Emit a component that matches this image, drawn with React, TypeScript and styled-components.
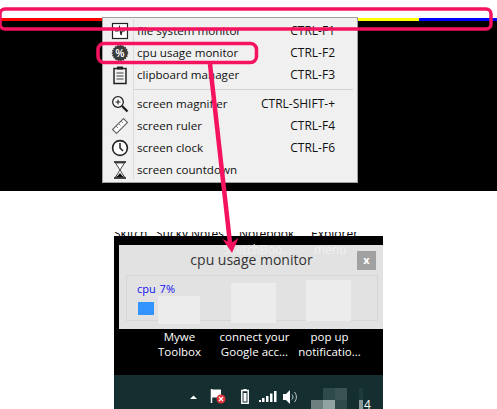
import React from "react";
import styled, { createGlobalStyle } from "styled-components";

const GlobalStyle = createGlobalStyle`
  html, body {
    margin: 0;
    padding: 0;
    background: #fff;
  }
  body {
    font-family: "Open Sans", "Liberation Sans", sans-serif;
    overflow: hidden;
  }
`;

const Page = styled.div`
  position: relative;
  width: 497px;
  height: 409px;
  padding-top: 17px;
  box-sizing: border-box;
  background: #fff;
  overflow: hidden;
`;

const TopScreen = styled.div`
  position: relative;
  height: 174px;
  background: #000;
`;

const Stripes = styled.div`
  position: absolute;
  inset: 0 0 auto 0;
  height: 4px;
  display: flex;
`;

const Stripe = styled.div<{ $w: number; $c: string }>`
  width: ${(p) => p.$w}px;
  background: ${(p) => p.$c};
  border-top: 1px solid #fff;
`;

const Menu = styled.div`
  position: relative;
  margin-left: 102px;
  width: 256px;
  height: 166px;
  box-sizing: border-box;
  padding: 2px 0 1px;
  background: #f0f0f0;
  border: 1px solid #a0a0a0;
  font-size: 11.6px;
  color: #111;
`;

const Gutter = styled.div`
  position: absolute;
  left: 30px;
  top: 2px;
  bottom: 3px;
  width: 1px;
  background: #dcdcdc;
`;

const Row = styled.div`
  height: 22px;
  display: flex;
  align-items: center;
  padding-right: 22px;
`;

const RowIcon = styled.div`
  width: 34px;
  display: flex;
  justify-content: center;
`;

const RowLabel = styled.span`
  flex: 1;
  padding-bottom: 2px;
`;

const RowKey = styled.span`
  font-size: 12px;
  padding-bottom: 2px;
`;

const Separator = styled.div`
  height: 1px;
  margin: 3px 4px 3px 30px;
  background: #d4d4d4;
`;

const Gap = styled.div`
  height: 45px;
  padding-top: 41px;
  box-sizing: border-box;
  background: #fff;
`;

const CutRow = styled.div`
  margin-left: 114px;
  height: 4px;
  display: flex;
  overflow: hidden;
  color: #000;
  font-size: 12px;
  line-height: 4px;
`;

const CutLabel = styled.span<{ $w: number }>`
  width: ${(p) => p.$w}px;
  white-space: nowrap;
`;

const LowerScreen = styled.div`
  position: relative;
  margin-left: 114px;
  width: 269px;
  height: 173px;
  display: flex;
  flex-direction: column;
  padding-top: 9px;
  box-sizing: border-box;
  background: #000;
`;

const Monitor = styled.div`
  position: relative;
  margin-left: 5px;
  width: 264px;
  height: 84px;
  box-sizing: border-box;
  padding: 0 0 0 7px;
  background: #e2e2e2;
  flex-shrink: 0;
`;

const GhostLabel = styled.span<{ $x: number }>`
  position: absolute;
  left: ${(p) => p.$x}px;
  top: -4px;
  font-size: 12px;
  color: #f0f0f0;
`;

const MonitorTitle = styled.div`
  height: 30px;
  line-height: 30px;
  padding-right: 6px;
  text-align: center;
  font-size: 14px;
  color: #333;
`;

const CloseButton = styled.div`
  position: absolute;
  right: 7px;
  top: 6px;
  width: 19px;
  height: 19px;
  background: #a1a1a1;
  color: #fff;
  font-size: 11px;
  font-weight: 700;
  line-height: 17px;
  text-align: center;
`;

const CpuBox = styled.div`
  width: 252px;
  height: 46px;
  box-sizing: border-box;
  border: 1px solid #d6d6d6;
  padding: 0 10px;
  display: flex;
  gap: 30px;
`;

const CpuCol = styled.div`
  width: 64px;
  padding-top: 5px;
`;

const CpuText = styled.div`
  font-size: 11px;
  line-height: 15px;
  word-spacing: 1px;
  color: #1010f0;
`;

const CpuRow = styled.div`
  display: flex;
  gap: 4px;
`;

const CpuBar = styled.div`
  margin: 6px 0 0 1px;
  width: 16px;
  height: 13px;
  background: #3394ff;
`;

const Ghost = styled.div<{ $w: number; $h: number; $top: number }>`
  width: ${(p) => p.$w}px;
  height: ${(p) => p.$h}px;
  margin-top: ${(p) => p.$top}px;
  background: #ececec;
`;

const AppLabels = styled.div`
  display: flex;
  padding-left: 28px;
  color: #fff;
  font-size: 11.5px;
  line-height: 15px;
  text-align: center;
`;

const AppLabel = styled.div`
  width: 75px;
`;

const Taskbar = styled.div`
  position: absolute;
  left: 0;
  right: 0;
  bottom: 0;
  height: 34px;
  background: #152e30;
`;

const Tray = styled.svg`
  display: block;
`;

const ClockDigit = styled.span`
  position: absolute;
  left: 250px;
  bottom: 0;
  color: #fff;
  font-size: 12px;
  line-height: 9px;
`;

const Annotations = styled.svg`
  position: absolute;
  left: 0;
  top: 0;
  pointer-events: none;
`;

const FileIcon = () => (
  <svg width="18" height="18" viewBox="0 0 18 18">
    <rect x="1.5" y="1.5" width="15" height="15" fill="#fff" stroke="#222" strokeWidth="1.2" />
    <path d="M4 9h3l1.5-4 1.5 8 1-4h3" fill="none" stroke="#222" strokeWidth="1.2" />
  </svg>
);

const CpuIcon = () => (
  <svg width="18" height="18" viewBox="0 0 18 18">
    <circle cx="9" cy="9" r="7.5" fill="#3b3b3b" stroke="#3b3b3b" strokeWidth="1.4" strokeDasharray="1.5 1" />
    <circle cx="9" cy="9" r="6.5" fill="#3b3b3b" />
    <text x="9" y="12.5" textAnchor="middle" fontSize="10" fontWeight="700" fill="#fff" fontFamily="Liberation Sans">%</text>
  </svg>
);

const ClipIcon = () => (
  <svg width="18" height="20" viewBox="0 0 18 20">
    <rect x="3" y="3.5" width="12" height="15" fill="none" stroke="#222" strokeWidth="1.5" />
    <rect x="6" y="1.5" width="6" height="3" fill="#222" />
    <path d="M5.5 8h7M5.5 11h7M5.5 14h7" stroke="#444" strokeWidth="1.1" />
  </svg>
);

const MagnifierIcon = () => (
  <svg width="18" height="18" viewBox="0 0 18 18">
    <circle cx="7" cy="7" r="5.3" fill="#fff" stroke="#222" strokeWidth="1.3" />
    <path d="M7 4.5v5M4.5 7h5" stroke="#222" strokeWidth="1.1" />
    <path d="M11 11l5.5 5.5" stroke="#222" strokeWidth="2.4" />
  </svg>
);

const RulerIcon = () => (
  <svg width="18" height="18" viewBox="0 0 18 18">
    <path d="M1.5 12.5L12.5 1.5L16.5 5.5L5.5 16.5Z" fill="#fff" stroke="#666" strokeWidth="1.1" />
    <path d="M5 9l2 2M7.5 6.5l2 2M10 4l2 2" stroke="#888" strokeWidth="1" />
  </svg>
);

const ClockIcon = () => (
  <svg width="18" height="18" viewBox="0 0 18 18">
    <circle cx="9" cy="9" r="7.4" fill="#fff" stroke="#222" strokeWidth="1.6" />
    <path d="M9 4v5l3 3" fill="none" stroke="#222" strokeWidth="1.5" />
  </svg>
);

const HourglassIcon = () => (
  <svg width="14" height="18" viewBox="0 0 14 18">
    <path d="M1 1h12M1 17h12" stroke="#111" strokeWidth="1.6" />
    <path d="M2.5 2L7 9l4.5 7h-9L7 9l4.5-7z" fill="#fff" stroke="#333" strokeWidth="0.9" />
    <path d="M3.5 16L7 12l3.5 4z" fill="#111" />
  </svg>
);

const topItems = [
  { icon: <FileIcon />, label: "file system monitor", keys: "CTRL-F1" },
  { icon: <CpuIcon />, label: "cpu usage monitor", keys: "CTRL-F2" },
  { icon: <ClipIcon />, label: "clipboard manager", keys: "CTRL-F3" },
];

const bottomItems = [
  { icon: <MagnifierIcon />, label: "screen magnifier", keys: "CTRL-SHIFT-+" },
  { icon: <RulerIcon />, label: "screen ruler", keys: "CTRL-F4" },
  { icon: <ClockIcon />, label: "screen clock", keys: "CTRL-F6" },
  { icon: <HourglassIcon />, label: "screen countdown", keys: "" },
];

const MenuRow = ({ icon, label, keys }: { icon: React.ReactNode; label: string; keys: string }) => (
  <Row>
    <RowIcon>{icon}</RowIcon>
    <RowLabel>{label}</RowLabel>
    <RowKey>{keys}</RowKey>
  </Row>
);

export default function App() {
  return (
    <Page>
      <GlobalStyle />
      <TopScreen>
        <Stripes>
          <Stripe $w={102} $c="#ff0000" />
          <Stripe $w={256} $c="#000" />
          <Stripe $w={61} $c="#ffff00" />
          <Stripe $w={78} $c="#0000ff" />
        </Stripes>
        <Menu>
          <Gutter />
          {topItems.map((item) => (
            <MenuRow key={item.label} {...item} />
          ))}
          <Separator />
          {bottomItems.map((item) => (
            <MenuRow key={item.label} {...item} />
          ))}
        </Menu>
      </TopScreen>
      <Gap>
        <CutRow>
          <CutLabel $w={42}>Skitch</CutLabel>
          <CutLabel $w={83}>Sticky Notes</CutLabel>
          <CutLabel $w={72}>Notebook</CutLabel>
          <CutLabel $w={50}>Explorer</CutLabel>
        </CutRow>
      </Gap>
      <LowerScreen>
        <Monitor>
          <GhostLabel $x={104}>SketchBoo...</GhostLabel>
          <GhostLabel $x={195}>menu</GhostLabel>
          <MonitorTitle>cpu usage monitor</MonitorTitle>
          <CloseButton>x</CloseButton>
          <CpuBox>
            <CpuCol>
              <CpuText>cpu 7%</CpuText>
              <CpuRow>
                <CpuBar />
                <Ghost $w={42} $h={28} $top={0} />
              </CpuRow>
            </CpuCol>
            <Ghost $w={45} $h={40} $top={7} />
            <Ghost $w={45} $h={41} $top={4} />
          </CpuBox>
        </Monitor>
        <AppLabels>
          <AppLabel>Mywe<br />Toolbox</AppLabel>
          <AppLabel>connect your<br />Google acc...</AppLabel>
          <AppLabel>pop up<br />notificatio...</AppLabel>
        </AppLabels>
        <Taskbar>
          <Tray width="269" height="34" viewBox="0 0 269 34">
            <path d="M76 24l3.5-3.5 3.5 3.5z" fill="#fff" />
            <path d="M97.5 14v14" stroke="#fff" strokeWidth="1.5" />
            <path d="M98 14.5h9v8h-9z" fill="#fff" />
            <circle cx="107" cy="24" r="4.5" fill="#e0353a" />
            <path d="M105 22l4 4M109 22l-4 4" stroke="#fff" strokeWidth="1.2" />
            <path d="M127.8 15.5h6.4v12.8h-6.4z" fill="none" stroke="#fff" strokeWidth="1.5" />
            <path d="M129.5 14h3v1.5h-3zM129.5 18h3v8.5h-3z" fill="#fff" />
            <path d="M145 25h2v2h-2zM148 23h2.5v4H148zM152 21h2.5v6H152zM156 18.5h2.5V27H156zM160 16h2.5v11H160z" fill="#fff" />
            <path d="M169 19h3l4-4v14l-4-4h-3z" fill="#fff" />
            <path d="M178 19.5c1.3 1.5 1.3 3.5 0 5M180.5 17c2.5 3 2.5 7 0 10" fill="none" stroke="#c5cccc" strokeWidth="1" />
            <path d="M209 13h12v12h-12z" fill="#2e4a4b" />
            <path d="M221 13h12v12h-12z" fill="#3a5354" />
            <path d="M197 25h12v9h-12z" fill="#6d7f7e" />
            <path d="M209 25h12v9h-12z" fill="#8fa3a1" />
            <path d="M221 25h12v9h-12z" fill="#2f4a4a" />
            <path d="M245 13h4v12h-4z" fill="#1f3a3a" />
            <path d="M245 25h4v9h-4z" fill="#8a9a98" />
          </Tray>
          <ClockDigit>4</ClockDigit>
        </Taskbar>
      </LowerScreen>
      <Annotations width="497" height="409" viewBox="0 0 497 409">
        <rect x="0" y="9" width="491" height="20" rx="5" fill="none" stroke="#f5135f" strokeWidth="3.5" />
        <rect x="98" y="43.5" width="158.5" height="19" rx="6" fill="none" stroke="#f5135f" strokeWidth="3.5" />
        <path d="M210 64L230 243" stroke="#f5135f" strokeWidth="4.5" />
        <path d="M222.5 239L231 243L238.5 238L232 253Z" fill="#f5135f" />
      </Annotations>
    </Page>
  );
}
